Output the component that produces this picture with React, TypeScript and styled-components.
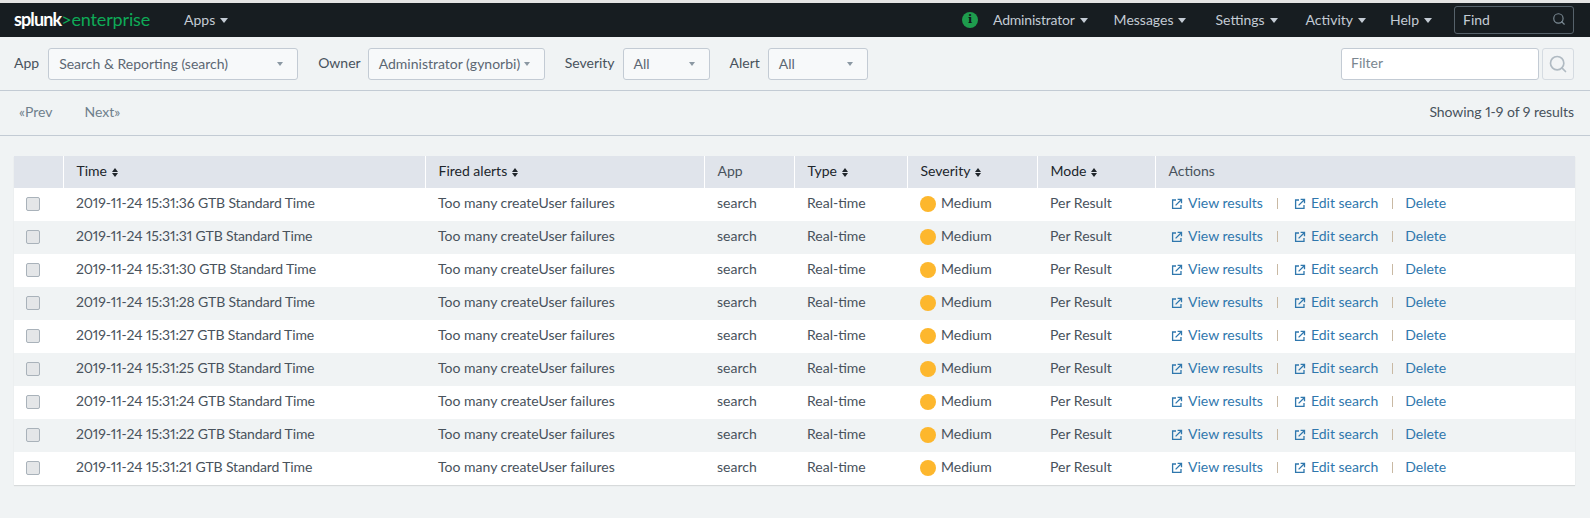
import React from "react";
import styled, {createGlobalStyle} from "styled-components";
import {Search} from "lucide-react";

const GlobalStyle = createGlobalStyle`
  html, body {
    margin: 0;
    padding: 0;
    background: #f0f3f4;
    font-family: Lato, "Liberation Sans", sans-serif;
    font-size: 14px;
    color: #48525c;
    font-variant-numeric: proportional-nums;
  }
`

const alerts = ["36", "31", "30", "28", "27", "25", "24", "22", "21"];

const columns = [
    {label: "", width: 49},
    {label: "Time", width: 362, sortable: true},
    {label: "Fired alerts", width: 279, sortable: true},
    {label: "App", width: 90},
    {label: "Type", width: 113, sortable: true},
    {label: "Severity", width: 130, sortable: true},
    {label: "Mode", width: 118, sortable: true},
    {label: "Actions", width: 420},
];

const navItems = [
    {label: "Messages", after: 3},
    {label: "Settings", after: 2},
    {label: "Activity", after: -2},
    {label: "Help", after: 0},
];

const OpenIcon = () => (
    <LinkIcon viewBox="0 0 12 12" width="12" height="12" fill="none" stroke="currentColor" strokeWidth="1.3">
        <path d="M5 2H1.6v8.4H10V7" />
        <path d="M4.6 7.4 10 2M6.6 1.4h3.9v3.9" />
    </LinkIcon>
);

const App: React.FC = () => {
    return (
        <Page>
            <GlobalStyle />
            <NavBar>
                <Logo>splunk<LogoAccent>&gt;enterprise</LogoAccent></Logo>
                <NavItem $first>Apps <NavCaret /></NavItem>
                <NavRight>
                    <InfoBadge>i</InfoBadge>
                    <NavItem $tight>Administrator <NavCaret /></NavItem>
                    {navItems.map(item => <NavItem key={item.label} $after={item.after}>{item.label} <NavCaret /></NavItem>)}
                    <FindBox>
                        Find
                        <Search size={14} color="#7b8a94" />
                    </FindBox>
                </NavRight>
            </NavBar>

            <FilterBar>
                <FieldLabel $after={9}>App</FieldLabel>
                <Select $width={250}>Search &amp; Reporting (search)<SelectCaret /></Select>
                <FieldLabel $gap $after={7}>Owner</FieldLabel>
                <Select $width={177}>Administrator (gynorbi)<SelectCaret /></Select>
                <FieldLabel $gap $after={8}>Severity</FieldLabel>
                <Select $width={87}>All<SelectCaret /></Select>
                <FieldLabel $gap $after={8}>Alert</FieldLabel>
                <Select $width={100}>All<SelectCaret /></Select>
                <FilterInput>Filter</FilterInput>
                <SearchButton><Search size={20} color="#b0bac2" /></SearchButton>
            </FilterBar>

            <Pager>
                <PagerLink>«Prev</PagerLink>
                <PagerLink>Next»</PagerLink>
                <Showing>Showing 1-9 of 9 results</Showing>
            </Pager>

            <Table>
                <colgroup>
                    {columns.map((col, i) => <col key={i} style={{width: col.width}} />)}
                </colgroup>
                <thead>
                    <tr>
                        {columns.map((col, i) => (
                            <HeadCell key={i} $sortable={col.sortable}>
                                {col.label}
                                {col.sortable && <SortIcon />}
                            </HeadCell>
                        ))}
                    </tr>
                </thead>
                <tbody>
                    {alerts.map(sec => (
                        <Row key={sec}>
                            <Cell><CheckBox /></Cell>
                            <TimeCell>2019-11-24 15:31:{sec} GTB Standard Time</TimeCell>
                            <Cell>Too many createUser failures</Cell>
                            <Cell>search</Cell>
                            <Cell>Real-time</Cell>
                            <SeverityCell><SeverityDot />Medium</SeverityCell>
                            <Cell>Per Result</Cell>
                            <ActionsCell>
                                <ActionLink><OpenIcon />View results</ActionLink>
                                <Divider />
                                <ActionLink><OpenIcon />Edit search</ActionLink>
                                <Divider />
                                <ActionLink>Delete</ActionLink>
                            </ActionsCell>
                        </Row>
                    ))}
                </tbody>
            </Table>
        </Page>
    );
}

const Page = styled.div`
  height: 518px;
  border-top: 3px solid #e4e4e4;
  box-sizing: border-box;
  overflow: hidden;
`

const NavBar = styled.div`
  height: 34px;
  background: #171d21;
  display: flex;
  align-items: center;
  padding: 0 16px 0 14px;
`

const Logo = styled.div`
  width: 136px;
  font-size: 18px;
  font-weight: 700;
  letter-spacing: -0.9px;
  color: #fff;
  padding-bottom: 2px;
`

const LogoAccent = styled.span`
  font-weight: 400;
  letter-spacing: -0.15px;
  color: #0eaa57;
`

const NavItem = styled.div<{$first?: boolean, $tight?: boolean, $after?: number}>`
  color: #c3cbd4;
  font-size: 14px;
  letter-spacing: ${props => props.$tight ? "-0.2px" : "0"};
  display: flex;
  align-items: center;
  gap: 5px;
  padding-bottom: 2px;
  margin-left: ${props => props.$first ? "34px" : "0"};
  margin-right: ${props => props.$after || 0}px;
`

const NavCaret = styled.span`
  width: 0;
  height: 0;
  margin-top: 2px;
  border-left: 4px solid transparent;
  border-right: 4px solid transparent;
  border-top: 5px solid #c3cbd4;
`

const NavRight = styled.div`
  margin-left: auto;
  display: flex;
  align-items: center;
  gap: 26px;
`

const InfoBadge = styled.div`
  width: 16px;
  height: 16px;
  border-radius: 50%;
  background: #1e9c4d;
  color: #10161a;
  font-family: "DejaVu Serif", serif;
  font-size: 11px;
  font-weight: 700;
  line-height: 16px;
  text-align: center;
  margin-right: -11px;
`

const FindBox = styled.div`
  width: 120px;
  height: 28px;
  box-sizing: border-box;
  border: 1px solid #56626b;
  border-radius: 3px;
  padding: 0 7px 2px 8px;
  margin-left: -4px;
  color: #c3cbd4;
  display: flex;
  align-items: center;
  justify-content: space-between;
`

const FilterBar = styled.div`
  height: 54px;
  box-sizing: border-box;
  border-bottom: 1px solid #c3cbd4;
  padding: 11px 16px 0 14px;
  display: flex;
  align-items: flex-start;
`

const FieldLabel = styled.label<{$gap?: boolean, $after: number}>`
  line-height: 30px;
  margin-right: ${props => props.$after}px;
  margin-left: ${props => props.$gap ? "20px" : "0"};
  color: #48525c;
`

const Select = styled.div<{$width: number}>`
  width: ${props => props.$width}px;
  height: 32px;
  box-sizing: border-box;
  background: #f7f9fa;
  border: 1px solid #c3cbd4;
  border-radius: 3px;
  padding: 0 14px 2px 10px;
  color: #5c6773;
  display: flex;
  align-items: center;
  justify-content: space-between;
`

const SelectCaret = styled.span`
  width: 0;
  height: 0;
  margin-top: 2px;
  border-left: 3px solid transparent;
  border-right: 3px solid transparent;
  border-top: 4px solid #8b98a3;
`

const FilterInput = styled.div`
  width: 198px;
  height: 32px;
  box-sizing: border-box;
  margin-left: auto;
  background: #fff;
  border: 1px solid #c3cbd4;
  border-radius: 3px;
  padding: 0 9px;
  line-height: 28px;
  color: #7a8690;
`

const SearchButton = styled.div`
  width: 32px;
  height: 32px;
  box-sizing: border-box;
  margin-left: 3px;
  background: #f2f4f5;
  border: 1px solid #d5dbe1;
  border-radius: 3px;
  display: flex;
  align-items: center;
  justify-content: center;
`

const Pager = styled.div`
  height: 45px;
  box-sizing: border-box;
  border-bottom: 1px solid #c3cbd4;
  padding: 0 16px 3px 19px;
  display: flex;
  align-items: center;
  gap: 32px;
`

const PagerLink = styled.span`
  color: #6f808c;
`

const Showing = styled.span`
  margin-left: auto;
  letter-spacing: -0.05px;
  color: #48525c;
`

const Table = styled.table`
  width: 1561px;
  margin: 20px 0 0 14px;
  border-collapse: collapse;
  table-layout: fixed;
  box-shadow: 0 1px 1px rgba(0, 0, 0, 0.1);
`

const HeadCell = styled.th<{$sortable?: boolean}>`
  height: 32px;
  padding: 0 13px 3px;
  box-sizing: border-box;
  background: #e0e4eb;
  border-left: 1px solid #fff;
  text-align: left;
  font-weight: 400;
  color: ${props => props.$sortable ? "#20262b" : "#48525c"};
  &:first-child {
    border-left: none;
  }
`

const SortIcon = styled.span`
  display: inline-block;
  vertical-align: middle;
  margin-left: 5px;
  width: 0;
  height: 9px;
  border-left: 3px solid transparent;
  border-right: 3px solid transparent;
  position: relative;
  &::before, &::after {
    content: "";
    position: absolute;
    left: -3px;
    border-left: 3px solid transparent;
    border-right: 3px solid transparent;
  }
  &::before {
    top: 0;
    border-bottom: 4px solid #20262b;
  }
  &::after {
    bottom: 0;
    border-top: 4px solid #20262b;
  }
`

const Row = styled.tr`
  background: #fff;
  &:nth-child(even) {
    background: #f0f3f4;
  }
`

const Cell = styled.td`
  height: 33px;
  padding: 0 13px 5px;
  box-sizing: border-box;
  color: #48525c;
  white-space: nowrap;
`

const TimeCell = styled(Cell)`
  letter-spacing: -0.15px;
`

const SeverityCell = styled(Cell)`
  padding-bottom: 3px;
`

const ActionsCell = styled(Cell)`
  padding-left: 12px;
`

const CheckBox = styled.div`
  width: 12px;
  height: 12px;
  margin: 3px 0 0 -1px;
  background: #e4e6e8;
  border: 1px solid #a9b2ba;
  border-radius: 2px;
`

const SeverityDot = styled.span`
  display: inline-block;
  width: 16px;
  height: 16px;
  border-radius: 50%;
  background: #fdb72d;
  vertical-align: -4px;
  margin-right: 5px;
`

const ActionLink = styled.a`
  color: #2f77ad;
`

const LinkIcon = styled.svg`
  vertical-align: -2px;
  margin: 0 5px 0 4px;
`

const Divider = styled.span`
  display: inline-block;
  width: 1px;
  height: 11px;
  background: #c9b9a3;
  vertical-align: -1px;
  margin: 0 12px 0 14px;
`

export default App;
